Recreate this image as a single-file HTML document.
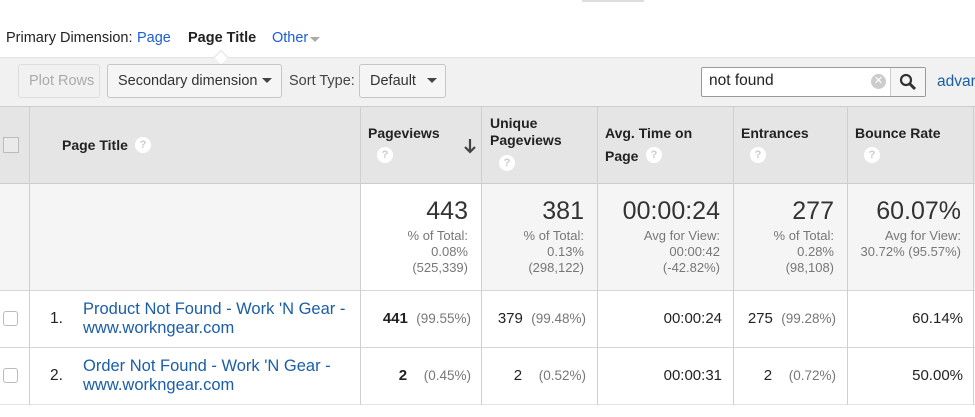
<!DOCTYPE html>
<html><head><meta charset="utf-8"><style>
*{margin:0;padding:0;box-sizing:border-box}
body{width:975px;height:417px;overflow:hidden;background:#fff;font-family:"Liberation Sans",Arial,sans-serif;color:#222;position:relative}
.a{position:absolute;white-space:nowrap}
.btn{position:absolute;border:1px solid #c6c6c6;border-radius:3px;background:#f5f5f5;font-size:14.5px;color:#333;padding-left:10px;line-height:32px;height:34px}
.caret{position:absolute;width:0;height:0;border-left:5px solid transparent;border-right:5px solid transparent;border-top:5px solid #444}
.q{position:absolute;width:16px;height:16px;border-radius:50%;background:#fff;color:#ccc;font-size:11px;font-weight:bold;text-align:center;line-height:16px}
.vl{position:absolute;width:1px;background:#cfcfcf;top:106px;height:299px}
.hl{position:absolute;left:0;width:975px;height:1px;background:#d6d6d6}
.th{position:absolute;font-weight:bold;font-size:14px;color:#222;line-height:22px}
.big{position:absolute;font-size:25px;color:#333;text-align:right}
.sm{position:absolute;font-size:13px;color:#777;text-align:right;line-height:16px}
.cell{position:absolute;font-size:15px;text-align:right;white-space:nowrap}
.g{color:#777;font-size:13.5px}
.cb{position:absolute;left:3px;width:15px;height:15px;border:1px solid #bbb;border-radius:3px;background:#fff}
.lnk{color:#1a5ea8;font-size:16.5px;line-height:19px}
</style></head><body>
<div class="a" style="left:582px;top:0;width:62px;height:2px;background:#ddd"></div>
<div class="a" style="left:6px;top:30px;font-size:14.5px">Primary Dimension:</div>
<div class="a" style="left:137px;top:30px;font-size:14.5px;color:#1a5ed6">Page</div>
<div class="a" style="left:188px;top:30px;font-size:14.5px;font-weight:bold">Page Title</div>
<div class="a" style="left:272px;top:30px;font-size:14.5px;color:#1a5ed6">Other</div>
<div class="caret" style="left:310px;top:37px;border-top-color:#aaa"></div>
<div class="a" style="left:0;top:57px;width:975px;height:49px;background:#f1f1f1;border-top:1px solid #e2e2e2"></div>
<div class="a" style="left:216px;top:52px;width:10px;height:10px;background:#fff;border-left:1px solid #e2e2e2;border-top:1px solid #e2e2e2;transform:rotate(45deg)"></div>
<div class="btn" style="left:18px;top:64px;width:82px;color:#aaa;background:#f1f1f1;border-color:#ddd">Plot Rows</div>
<div class="btn" style="left:107px;top:64px;width:175px">Secondary dimension</div>
<div class="caret" style="left:262px;top:78px"></div>
<div class="a" style="left:289px;top:73px;font-size:14.5px;color:#444">Sort Type:</div>
<div class="btn" style="left:359px;top:64px;width:87px">Default</div>
<div class="caret" style="left:427px;top:78px"></div>
<div class="a" style="left:701px;top:67px;width:225px;height:30px;border:1px solid #999;background:#fff;border-radius:2px"></div>
<div class="a" style="left:890px;top:68px;width:35px;height:28px;background:#f5f5f5;border-left:1px solid #ccc"></div>
<div class="a" style="left:709px;top:72px;font-size:15.5px;color:#222">not found</div>
<div class="a" style="left:871px;top:74px;width:15px;height:15px;border-radius:50%;background:#ccc;color:#fff;font-size:11px;text-align:center;line-height:15px">✕</div>
<svg class="a" style="left:899px;top:73px" width="18" height="18" viewBox="0 0 18 18"><circle cx="7" cy="7" r="5" fill="none" stroke="#333" stroke-width="2.2"/><line x1="10.5" y1="10.5" x2="16" y2="16" stroke="#333" stroke-width="3"/></svg>
<div class="a" style="left:937px;top:73px;font-size:15.5px;color:#1a5ea8">advar</div>
<div class="a" style="left:0;top:106px;width:975px;height:77px;background:#e5e5e5"></div>
<div class="a" style="left:0;top:183px;width:975px;height:107px;background:#f5f5f5"></div>
<div class="a" style="left:361px;top:183px;width:120px;height:107px;background:#fff"></div>
<div class="hl" style="top:106px;background:#ccc"></div>
<div class="hl" style="top:183px;background:#ccc"></div>
<div class="hl" style="top:290px"></div>
<div class="hl" style="top:347px"></div>
<div class="hl" style="top:404px;background:#e5e5e5"></div>
<div class="vl" style="left:29px"></div><div class="vl" style="left:360px"></div><div class="vl" style="left:481px"></div><div class="vl" style="left:597px"></div><div class="vl" style="left:733px"></div><div class="vl" style="left:847px"></div><div class="vl" style="left:973px"></div>
<div class="a" style="left:3px;top:137px;width:16px;height:16px;border:1px solid #bbb;background:#eaeaea"></div>
<div class="th" style="left:62px;top:134px">Page Title</div><div class="q" style="left:135px;top:137px">?</div>
<div class="th" style="left:368px;top:122px">Pageviews</div><div class="q" style="left:377px;top:147px">?</div>
<svg class="a" style="left:463px;top:138px" width="14" height="16" viewBox="0 0 14 16"><path d="M7 1V14M2 9L7 14L12 9" fill="none" stroke="#444" stroke-width="2.2"/></svg>
<div class="th" style="left:490px;top:115px;line-height:17px">Unique<br>Pageviews</div><div class="q" style="left:499px;top:155px">?</div>
<div class="th" style="left:605px;top:122px">Avg. Time on</div><div class="th" style="left:605px;top:145px">Page</div><div class="q" style="left:646px;top:147px">?</div>
<div class="th" style="left:741px;top:122px">Entrances</div><div class="q" style="left:750px;top:147px">?</div>
<div class="th" style="left:855px;top:122px">Bounce Rate</div><div class="q" style="left:864px;top:147px">?</div>
<div class="big" style="right:507px;top:197px">443</div>
<div class="sm" style="right:507px;top:228px">% of Total:<br>0.08%<br>(525,339)</div>
<div class="big" style="right:391px;top:197px">381</div>
<div class="sm" style="right:391px;top:228px">% of Total:<br>0.13%<br>(298,122)</div>
<div class="big" style="right:255px;top:197px">00:00:24</div>
<div class="sm" style="right:255px;top:228px">Avg for View:<br>00:00:42<br>(-42.82%)</div>
<div class="big" style="right:141px;top:197px">277</div>
<div class="sm" style="right:141px;top:228px">% of Total:<br>0.28%<br>(98,108)</div>
<div class="big" style="right:14px;top:197px">60.07%</div>
<div class="sm" style="right:14px;top:228px">Avg for View:<br>30.72% (95.57%)</div>
<div class="cb" style="top:311px"></div>
<div class="a" style="left:50px;top:310px;font-size:15.5px">1.</div>
<div class="a lnk" style="left:83px;top:300px">Product Not Found - Work 'N Gear -<br>www.workngear.com</div>
<div class="cell" style="right:504px;top:310px"><b>441</b> &nbsp;<span class="g">(99.55%)</span></div>
<div class="cell" style="right:389px;top:310px">379 &nbsp;<span class="g">(99.48%)</span></div>
<div class="cell" style="right:253px;top:310px">00:00:24</div>
<div class="cell" style="right:139px;top:310px">275 &nbsp;<span class="g">(99.28%)</span></div>
<div class="cell" style="right:12px;top:310px">60.14%</div>
<div class="cb" style="top:368px"></div>
<div class="a" style="left:50px;top:367px;font-size:15.5px">2.</div>
<div class="a lnk" style="left:83px;top:357px">Order Not Found - Work 'N Gear -<br>www.workngear.com</div>
<div class="cell" style="right:504px;top:367px"><b>2</b> &nbsp;&nbsp;&nbsp;<span class="g">(0.45%)</span></div>
<div class="cell" style="right:389px;top:367px">2 &nbsp;&nbsp;&nbsp;<span class="g">(0.52%)</span></div>
<div class="cell" style="right:253px;top:367px">00:00:31</div>
<div class="cell" style="right:139px;top:367px">2 &nbsp;&nbsp;&nbsp;<span class="g">(0.72%)</span></div>
<div class="cell" style="right:12px;top:367px">50.00%</div>
</body></html>
